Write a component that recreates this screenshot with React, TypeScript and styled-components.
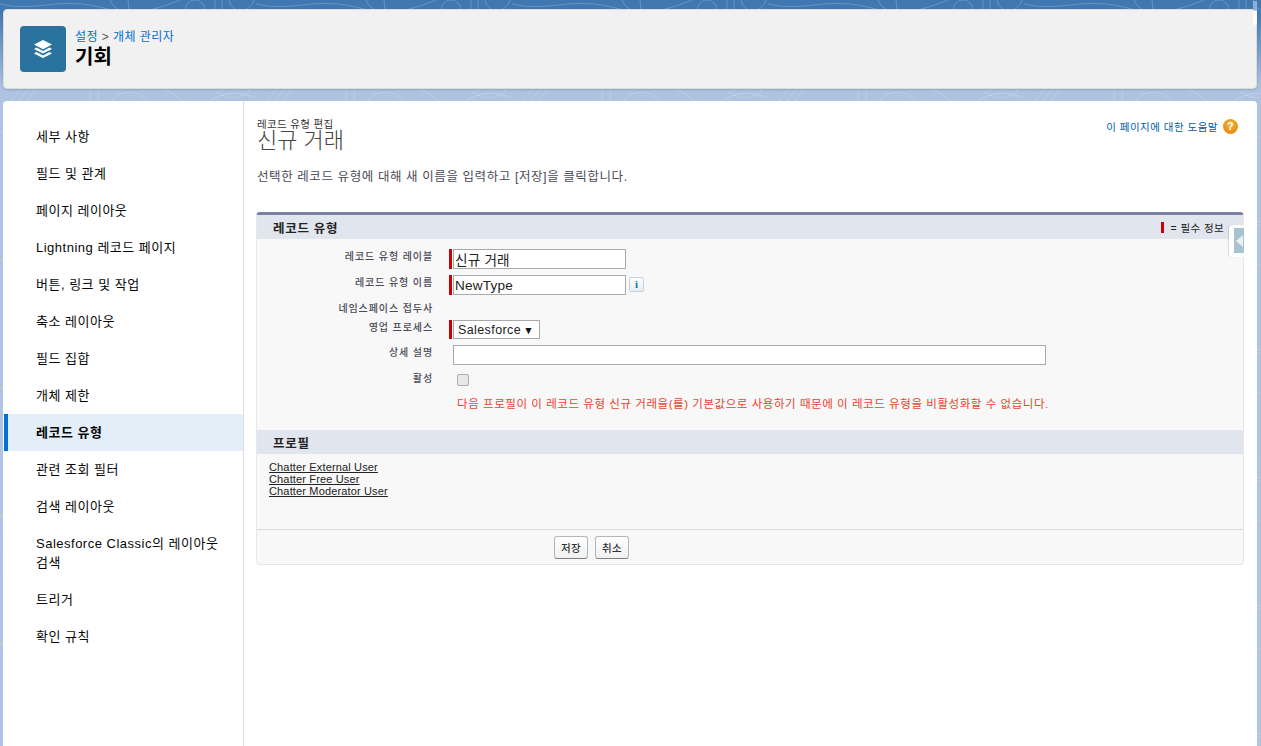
import React from 'react'
import styled, { createGlobalStyle } from 'styled-components'

const GlobalStyle = createGlobalStyle`
    html, body {
        margin: 0;
        padding: 0;
        height: 100%;
    }
    body {
        overflow: hidden;
        background: linear-gradient(180deg, #3f78b0 0px, #4179b1 12px, #adc3e1 88px, #b0c5e1 100%);
        font-family: "Liberation Sans", "Noto Sans CJK KR", sans-serif;
    }
`
const Topo = styled.svg`
    position: absolute;
    top: 0;
    left: 0;
    width: 1261px;
    height: 746px;
`
const Page = styled.div`
    position: relative;
    width: 1261px;
    height: 746px;
    padding: 9px 4px 0 3px;
    box-sizing: border-box;
    display: flex;
    flex-direction: column;
    gap: 12px;
    overflow: hidden;
`
const HeaderCard = styled.header`
    position: relative;
    height: 80px;
    box-sizing: border-box;
    background-color: #f1f1f1;
    border: 1px solid #dcdcdc;
    border-radius: 4px;
    box-shadow: 0 1px 2px rgb(0 0 0 / 15%);
    display: flex;
    align-items: center;
    padding-left: 16px;
    gap: 9px;
`
const ScrollNub = styled.div`
    position: absolute;
    top: -9px;
    right: -1px;
    width: 4px;
    height: 24px;
    border-radius: 0 0 2px 2px;
    background: linear-gradient(180deg, #8fb0d4 0, #8fb0d4 9px, #fff 10px);
`
const HeaderIcon = styled.div`
    width: 46px;
    height: 46px;
    border-radius: 4px;
    background-color: #2a739e;
    display: flex;
    align-items: center;
    justify-content: center;
`
const HeaderText = styled.div`
    display: flex;
    flex-direction: column;
    padding-bottom: 2px;
`
const Breadcrumb = styled.div`
    font-size: 12px;
    line-height: 17px;
    color: #0070d2;
    letter-spacing: 0.45px;
`
const Crumbsep = styled.span`
    color: #555;
`
const HeaderTitle = styled.div`
    font-size: 20px;
    line-height: 22px;
    font-weight: 700;
    color: #000;
`
const Panel = styled.div`
    position: relative;
    flex: 1;
    display: flex;
    background-color: #fff;
    border-radius: 4px 4px 0 0;
    padding-left: 1px;
`
const Sidebar = styled.nav`
    width: 240px;
    box-sizing: border-box;
    border-right: 1px solid #d8dde6;
    padding-top: 17px;
`
const NavItem = styled.div<{ $active?: boolean }>`
    padding: 9px 20px 9px ${p => (p.$active ? '28px' : '32px')};
    font-size: 13px;
    line-height: 19px;
    letter-spacing: 0.5px;
    word-break: keep-all;
    color: #080707;
    font-weight: ${p => (p.$active ? 700 : 400)};
    background-color: ${p => (p.$active ? '#e4eef9' : 'transparent')};
    border-left: ${p => (p.$active ? '4px solid #0070d2' : 'none')};
`
const Main = styled.main`
    flex: 1;
    padding: 17px 13px 0 12px;
    min-width: 0;
`
const TitleRow = styled.div`
    display: flex;
    justify-content: space-between;
    align-items: flex-start;
`
const TitleBlock = styled.div`
    padding-left: 1px;
`
const SubTitle = styled.div`
    font-size: 10.5px;
    line-height: 12px;
    letter-spacing: 0.35px;
    color: #333;
`
const PageTitle = styled.h1`
    margin: 0;
    font-size: 22px;
    line-height: 22px;
    font-weight: 300;
    color: #444;
`
const HelpLink = styled.div`
    display: flex;
    align-items: center;
    gap: 5px;
    margin: 1px 6px 0 0;
    font-size: 10.5px;
    letter-spacing: 0.5px;
    color: #015ba7;
`
const HelpIcon = styled.span`
    width: 15px;
    height: 15px;
    border-radius: 50%;
    background: radial-gradient(circle at 50% 35%, #f8b23a, #de8106);
    color: #fff;
    font-size: 11px;
    font-weight: 700;
    line-height: 15px;
    text-align: center;
`
const Description = styled.p`
    margin: 17px 0 0 1px;
    font-size: 12.5px;
    line-height: 16px;
    letter-spacing: 0.58px;
    color: #4a4a56;
`
const Block = styled.section`
    position: relative;
    margin-top: 27px;
    background-color: #f8f8f8;
    border-top: 3px solid #7a83a1;
    border-bottom: 1px solid #e4e4e4;
    border-left: 1px solid #e8e8e8;
    border-right: 1px solid #e8e8e8;
    border-radius: 4px;
`
const SectionBar = styled.div`
    height: 24px;
    display: flex;
    align-items: center;
    justify-content: space-between;
    padding: 0 19px 0 16px;
    background-color: #e1e5ee;
`
const SectionTitle = styled.span`
    font-size: 12.5px;
    font-weight: 700;
    letter-spacing: 0.7px;
    color: #222;
`
const RequiredNote = styled.span`
    display: flex;
    align-items: center;
    gap: 7px;
    font-size: 10.5px;
    letter-spacing: 0.4px;
    color: #222;
`
const RequiredMark = styled.i`
    width: 3px;
    height: 11px;
    background-color: #c00;
`
const Form = styled.div`
    display: grid;
    grid-template-columns: 176px 1fr;
    column-gap: 16px;
    row-gap: 6px;
    padding: 10px 0 17px;
`
const Label = styled.div`
    box-sizing: border-box;
    padding-top: 1px;
    height: 13px;
    font-size: 10px;
    line-height: 13px;
    font-weight: 500;
    letter-spacing: 0.9px;
    text-align: right;
    color: #4a4a56;
`
const Field = styled.div<{ $h: number }>`
    height: ${p => p.$h}px;
    display: flex;
    align-items: flex-start;
`
const Required = styled.i`
    width: 3px;
    margin-right: 1px;
    align-self: stretch;
    background-color: #c00;
`
const NoMark = styled.i`
    width: 4px;
`
const TextInput = styled.input<{ $w: number }>`
    width: ${p => p.$w}px;
    height: 20px;
    box-sizing: border-box;
    border: 1px solid #a9a9a9;
    padding: 0 1px;
    margin: 0;
    background-color: #fff;
    font-family: inherit;
    font-size: 13.6px;
    letter-spacing: 0.2px;
    color: #222;
    outline: none;
`
const InfoButton = styled.span`
    width: 15px;
    height: 15px;
    margin: 2px 0 0 3px;
    box-sizing: border-box;
    border: 1px solid #c5d3de;
    border-radius: 2px;
    background: linear-gradient(#fff, #e6eef4);
    color: #1f6fa8;
    font-family: "Liberation Serif", serif;
    font-size: 11px;
    font-weight: 700;
    line-height: 13px;
    text-align: center;
`
const SelectBox = styled.div`
    width: 87px;
    height: 19px;
    box-sizing: border-box;
    border: 1px solid #a9a9a9;
    background-color: #fff;
    display: flex;
    align-items: center;
    justify-content: space-between;
    padding: 0 5px 0 4px;
    font-size: 12.5px;
    letter-spacing: 0.4px;
    color: #222;
`
const Caret = styled.span`
    font-size: 10.5px;
    color: #111;
`
const Checkbox = styled.span`
    width: 12px;
    height: 12px;
    margin: 3px 0 0 4px;
    box-sizing: border-box;
    border: 1px solid #adadad;
    border-radius: 2px;
    background-color: #e8e8e8;
`
const ErrorText = styled.div`
    padding-left: 8px;
    font-size: 11.5px;
    line-height: 18px;
    letter-spacing: 0.55px;
    color: #e8432e;
    white-space: nowrap;
`
const ProfileList = styled.div`
    height: 75px;
    box-sizing: border-box;
    padding: 7px 0 0 12px;
    display: flex;
    flex-direction: column;
    align-items: flex-start;
`
const ProfileLink = styled.a`
    font-size: 11px;
    line-height: 12px;
    letter-spacing: 0.15px;
    color: #222;
    text-decoration: underline;
`
const Footer = styled.div`
    height: 35px;
    box-sizing: border-box;
    border-top: 1px solid #dbdbdb;
    display: flex;
    gap: 7px;
    padding: 6px 0 0 297px;
`
const Button = styled.button`
    width: 34px;
    height: 23px;
    padding: 0;
    border: 1px solid #b5b5b5;
    border-bottom-color: #7f7f7f;
    border-radius: 3px;
    background: linear-gradient(#fff, #f1f1f1);
    font-family: inherit;
    font-size: 10.5px;
    font-weight: 500;
    letter-spacing: 0.3px;
    color: #333;
`
const SideTab = styled.div`
    position: absolute;
    top: 10px;
    right: -1px;
    width: 15px;
    height: 32px;
    box-sizing: border-box;
    padding: 3px 0 4px 5px;
    background-color: #fff;
    border-radius: 4px 0 0 4px;
    box-shadow: -1px 0 1px rgb(0 0 0 / 12%);
`
const SideTabInner = styled.div`
    height: 100%;
    background-color: #a6c3cf;
    display: flex;
    align-items: center;
    justify-content: center;
`
const SideArrow = styled.i`
    border-style: solid;
    border-width: 6px 7px 6px 0;
    border-color: transparent #e9f1f4 transparent transparent;
`

const navItems = ['세부 사항', '필드 및 관계', '페이지 레이아웃', 'Lightning 레코드 페이지', '버튼, 링크 및 작업', '축소 레이아웃', '필드 집합', '개체 제한', '레코드 유형', '관련 조회 필터', '검색 레이아웃', 'Salesforce Classic의 레이아웃 검색', '트리거', '확인 규칙']
const profiles = ['Chatter External User', 'Chatter Free User', 'Chatter Moderator User']

function App() {
    return (
        <>
            <GlobalStyle />
            <Topo aria-hidden="true">
                <defs>
                    <pattern id="topo" width="256" height="128" patternUnits="userSpaceOnUse">
                        <g fill="none" stroke="#fff" strokeOpacity="0.2" strokeWidth="1">
                            <path d="M0 4 C30 12 60 -2 95 6 S130 18 128 0" />
                            <path d="M110 0 C118 20 150 12 180 0" />
                            <path d="M185 12 C185 -4 205 -4 205 12" />
                            <path d="M215 0 V12 M222 0 V12 M229 0 C232 14 250 14 254 0" />
                            <path d="M20 90 L8 104 M28 90 L16 104 M36 90 L24 104 M90 90 V104 M98 90 V104" />
                            <path d="M110 104 C118 88 140 88 150 104 M165 90 C178 95 180 100 186 104" />
                            <path d="M205 104 C225 90 240 92 256 98 M215 90 C225 100 240 100 250 90" />
                        </g>
                    </pattern>
                </defs>
                <rect width="1261" height="746" fill="url(#topo)" />
            </Topo>
            <Page>
                <HeaderCard>
                    <ScrollNub />
                    <HeaderIcon>
                        <svg width="20" height="20" viewBox="0 0 20 20" fill="#fff">
                            <path d="M10 1 L19 5.6 L10 10.2 L1 5.6 Z" />
                            <path d="M3.4 8.6 L10 12 L16.6 8.6 L19 10 L10 14.6 L1 10 Z" />
                            <path d="M3.4 13 L10 16.4 L16.6 13 L19 14.4 L10 19 L1 14.4 Z" />
                        </svg>
                    </HeaderIcon>
                    <HeaderText>
                        <Breadcrumb>설정 <Crumbsep>&gt;</Crumbsep> 개체 관리자</Breadcrumb>
                        <HeaderTitle>기회</HeaderTitle>
                    </HeaderText>
                </HeaderCard>
                <Panel>
                    <Sidebar>
                        {navItems.map(item => (
                            <NavItem key={item} $active={item === '레코드 유형'}>{item}</NavItem>
                        ))}
                    </Sidebar>
                    <Main>
                        <TitleRow>
                            <TitleBlock>
                                <SubTitle>레코드 유형 편집</SubTitle>
                                <PageTitle>신규 거래</PageTitle>
                            </TitleBlock>
                            <HelpLink>이 페이지에 대한 도움말 <HelpIcon>?</HelpIcon></HelpLink>
                        </TitleRow>
                        <Description>선택한 레코드 유형에 대해 새 이름을 입력하고 [저장]을 클릭합니다.</Description>
                        <Block>
                            <SectionBar>
                                <SectionTitle>레코드 유형</SectionTitle>
                                <RequiredNote><RequiredMark /> = 필수 정보</RequiredNote>
                            </SectionBar>
                            <SideTab><SideTabInner><SideArrow /></SideTabInner></SideTab>
                            <Form>
                                <Label>레코드 유형 레이블</Label>
                                <Field $h={20}><Required /><TextInput $w={173} defaultValue="신규 거래" /></Field>
                                <Label>레코드 유형 이름</Label>
                                <Field $h={20}><Required /><TextInput $w={173} defaultValue="NewType" /><InfoButton>i</InfoButton></Field>
                                <Label>네임스페이스 접두사</Label>
                                <Field $h={13} />
                                <Label>영업 프로세스</Label>
                                <Field $h={19}><Required /><SelectBox>Salesforce <Caret>▼</Caret></SelectBox></Field>
                                <Label>상세 설명</Label>
                                <Field $h={20}><NoMark /><TextInput $w={593} /></Field>
                                <Label>활성</Label>
                                <Field $h={18}><NoMark /><Checkbox /></Field>
                                <span />
                                <ErrorText>다음 프로필이 이 레코드 유형 신규 거래을(를) 기본값으로 사용하기 때문에 이 레코드 유형을 비활성화할 수 없습니다.</ErrorText>
                            </Form>
                            <SectionBar>
                                <SectionTitle>프로필</SectionTitle>
                            </SectionBar>
                            <ProfileList>
                                {profiles.map(name => (
                                    <ProfileLink key={name}>{name}</ProfileLink>
                                ))}
                            </ProfileList>
                            <Footer>
                                <Button>저장</Button>
                                <Button>취소</Button>
                            </Footer>
                        </Block>
                    </Main>
                </Panel>
            </Page>
        </>
    )
}

export default App
